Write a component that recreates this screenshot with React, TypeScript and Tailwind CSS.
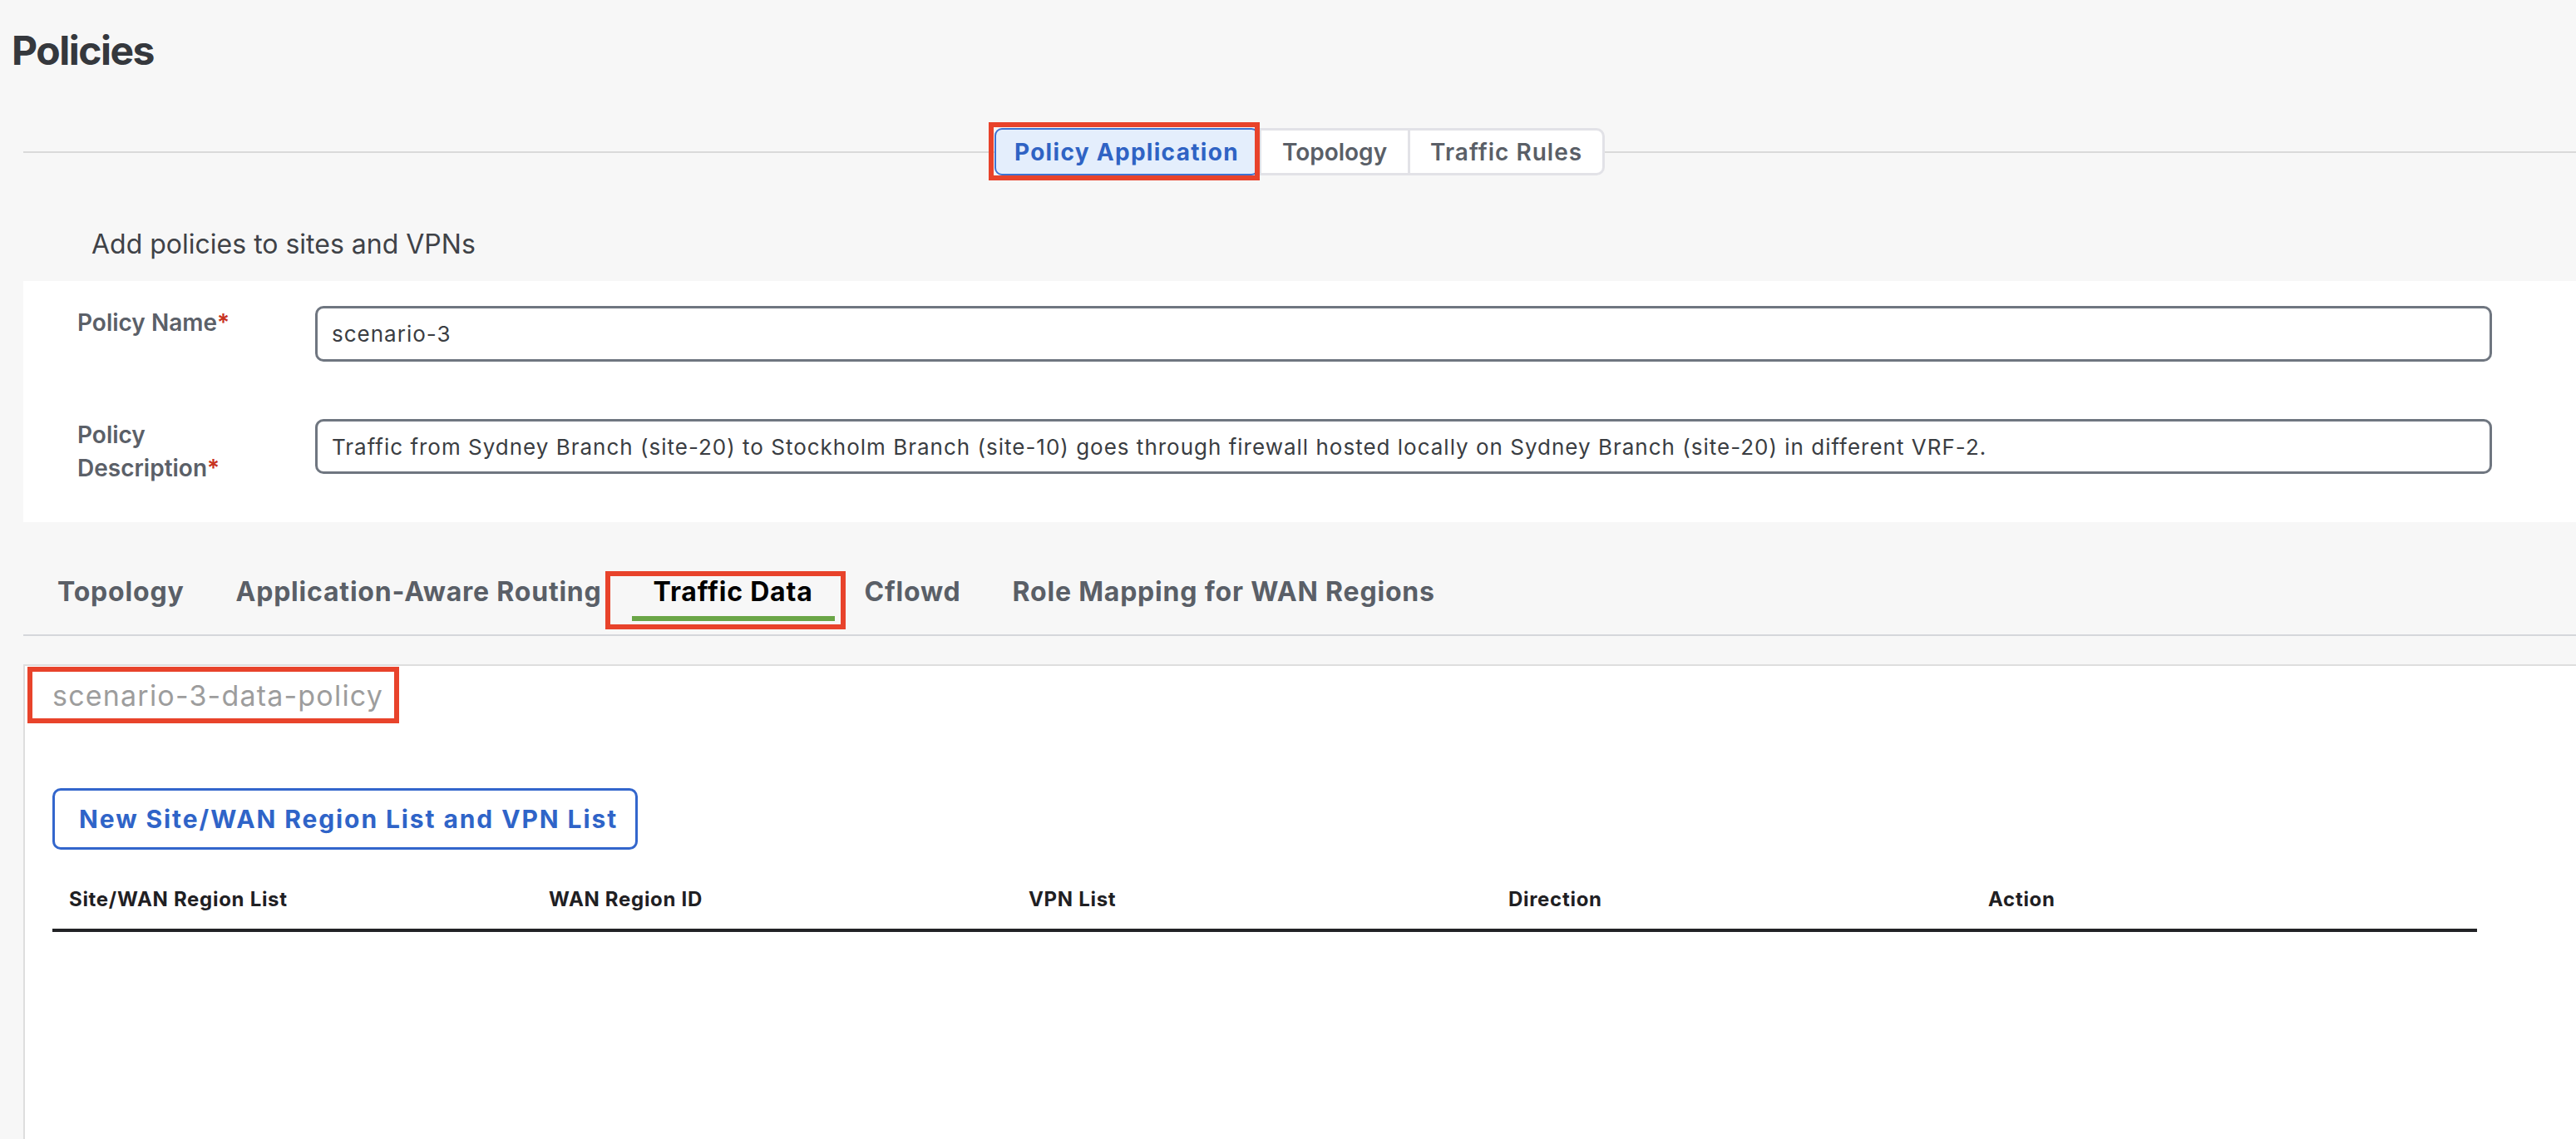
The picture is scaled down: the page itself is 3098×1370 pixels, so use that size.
import React from "react";

function RedMark({ className }: { className: string }) {
  return (
    <span
      aria-hidden
      className={`pointer-events-none absolute border-[6px] border-[#e8432b] ${className}`}
    />
  );
}

function Segmented() {
  return (
    <div className="flex h-[57px] items-stretch rounded-[10px] bg-[#e2e2e7] p-[3px] gap-[3px]">
      <div className="relative -m-[3px] mr-0 flex items-center rounded-[9px] border-[2px] border-[#3d72d2] bg-[#e4eefc] px-[22px] text-[28px] tracking-[1.3px] font-bold text-[#2f63c4]">
        Policy Application
        <RedMark className="-left-[9px] -right-[3px] -top-[9px] -bottom-[8px]" />
      </div>
      <div className="flex items-center bg-white px-[25px] text-[28px] font-semibold text-[#5a5f67]">
        Topology
      </div>
      <div className="flex items-center rounded-r-[7px] bg-white px-[24px] text-[28px] tracking-[1px] font-semibold text-[#5a5f67]">
        Traffic Rules
      </div>
    </div>
  );
}

function Tab({ label, active }: { label: string; active?: boolean }) {
  return (
    <div className="relative flex flex-col">
      <div
        className={`px-[26px] text-[32px] leading-[40px] tracking-[0.8px] font-bold ${
          active ? "text-black" : "text-[#5a5f67]"
        }`}
      >
        {label}
      </div>
      <div className={`mt-[9px] h-[6px] w-full ${active ? "bg-[#6aa647]" : ""}`} />
      <div className="h-[16px]" />
      {active && <RedMark className="-left-[32px] -right-[13px] -top-[5px] bottom-[6px]" />}
    </div>
  );
}

export default function App() {
  const cols = ["Site/WAN Region List", "WAN Region ID", "VPN List", "Direction", "Action"];
  return (
    <div className="flex h-[1370px] w-full flex-col overflow-hidden bg-[#f7f7f7] font-['Inter','Noto_Sans',sans-serif]">
      <div className="pl-[14px] pt-[32px]">
        <h1 className="text-[48px] leading-[58px] tracking-[-1.5px] font-bold text-[#35383d]">Policies</h1>
      </div>

      <div className="flex flex-1 flex-col pl-[28px]">
        <div className="mt-[64px] flex items-center">
          <div className="h-[2px] flex-1 bg-[#dadada]" />
          <Segmented />
          <div className="h-[2px] flex-1 bg-[#dadada]" />
        </div>

        <div className="mt-[64px] pl-[82px] text-[32px] leading-[38px] text-[#3f4247]">
          Add policies to sites and VPNs
        </div>

        <div className="mt-[25px] bg-white pt-[30px] pb-[45px] pl-[65px] pr-[101px]">
          <div className="flex items-start">
            <div className="w-[220px] mr-[66px] text-[28px] leading-[40px] font-semibold text-[#5b6068]">
              Policy Name<span className="text-[#c8321f]">*</span>
            </div>
            <div className="flex h-[67px] flex-1 items-center rounded-[10px] border-[3px] border-[#6f7680] px-[17px] text-[26px] tracking-[1px] text-[#3a3d42]">
              scenario-3
            </div>
          </div>
          <div className="mt-[68px] flex items-start">
            <div className="w-[220px] mr-[66px] text-[28px] leading-[40px] font-semibold text-[#5b6068]">
              Policy Description<span className="text-[#c8321f]">*</span>
            </div>
            <div className="mt-[1px] flex h-[66px] flex-1 items-center rounded-[10px] border-[3px] border-[#6f7680] px-[17px] text-[26px] tracking-[1px] text-[#3a3d42]">
              Traffic from Sydney Branch (site-20) to Stockholm Branch (site-10) goes through firewall hosted locally on Sydney Branch (site-20) in different VRF-2.
            </div>
          </div>
        </div>

        <div className="mt-[64px] flex gap-[10px] border-b-[2px] border-[#d5d7db] pl-[15px]">
          <Tab label="Topology" />
          <Tab label="Application-Aware Routing" />
          <Tab label="Traffic Data" active />
          <Tab label="Cflowd" />
          <Tab label="Role Mapping for WAN Regions" />
        </div>

        <div className="mt-[34px] flex-1 border-l-[2px] border-t-[2px] border-[#dedede] bg-white pl-[33px] pt-[15px]">
          <div className="relative inline-block text-[34px] leading-[41px] tracking-[1.2px] text-[#9d9d9d]">
            scenario-3-data-policy
            <RedMark className="-left-[30px] -right-[19px] -top-[14px] -bottom-[13px]" />
          </div>

          <div className="mt-[91px]">
            <button className="inline-flex h-[74px] items-center rounded-[10px] border-[3px] border-[#3366cc] bg-white pl-[29px] pr-[21px] text-[30px] tracking-[1.9px] font-bold text-[#2f64c8]">
              New Site/WAN Region List and VPN List
            </button>
          </div>

          <div className="mt-[42px] w-[2916px]">
            <div className="grid grid-cols-[577px_577px_577px_577px_1fr] border-b-[4px] border-[#222326] pb-[17px]">
              {cols.map((c) => (
                <div key={c} className="pl-[20px] text-[24px] leading-[36px] tracking-[0.7px] font-bold text-[#1f2023]">
                  {c}
                </div>
              ))}
            </div>
          </div>
        </div>
      </div>
    </div>
  );
}
